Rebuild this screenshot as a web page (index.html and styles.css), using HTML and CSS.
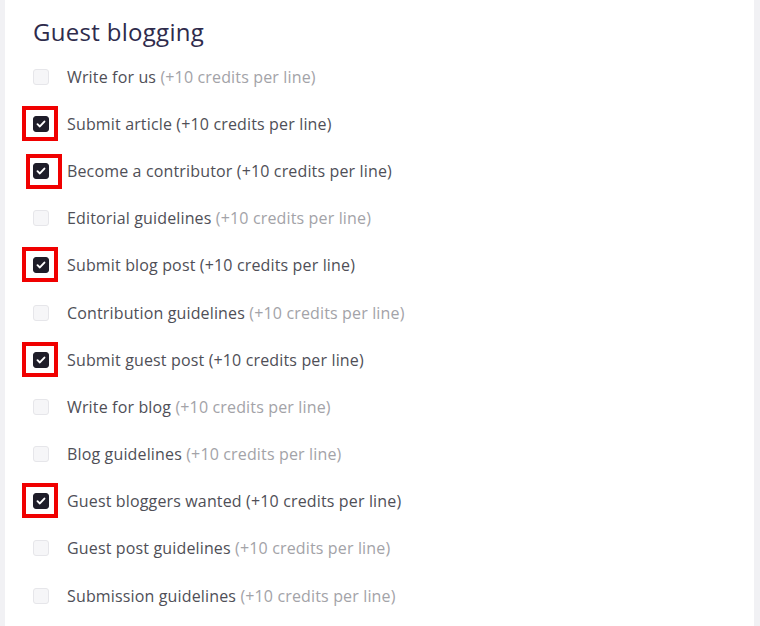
FILE: index.html
```html
<!DOCTYPE html>
<html lang="en">
<head>
    <meta charset="UTF-8">
    <meta name="viewport" content="width=device-width, initial-scale=1.0">
    <title>Guest blogging</title>
    <link rel="stylesheet" href="styles.css">
</head>
<body>
    <div class="card">
        <h2 class="title">Guest blogging</h2>
        <ul class="options">
            <li class="option">
                <span class="box"></span>
                <span class="label">Write for us <span class="note">(+10 credits per line)</span></span>
            </li>
            <li class="option checked">
                <span class="box"><svg viewBox="0 0 16 16"><path d="M4 8.2l2.7 2.6 5.2-5.6"/></svg></span>
                <span class="label">Submit article (+10 credits per line)</span>
                <span class="mark"></span>
            </li>
            <li class="option checked">
                <span class="box"><svg viewBox="0 0 16 16"><path d="M4 8.2l2.7 2.6 5.2-5.6"/></svg></span>
                <span class="label">Become a contributor (+10 credits per line)</span>
                <span class="mark shifted"></span>
            </li>
            <li class="option">
                <span class="box"></span>
                <span class="label">Editorial guidelines <span class="note">(+10 credits per line)</span></span>
            </li>
            <li class="option checked">
                <span class="box"><svg viewBox="0 0 16 16"><path d="M4 8.2l2.7 2.6 5.2-5.6"/></svg></span>
                <span class="label">Submit blog post (+10 credits per line)</span>
                <span class="mark"></span>
            </li>
            <li class="option">
                <span class="box"></span>
                <span class="label">Contribution guidelines <span class="note">(+10 credits per line)</span></span>
            </li>
            <li class="option checked">
                <span class="box"><svg viewBox="0 0 16 16"><path d="M4 8.2l2.7 2.6 5.2-5.6"/></svg></span>
                <span class="label">Submit guest post (+10 credits per line)</span>
                <span class="mark"></span>
            </li>
            <li class="option">
                <span class="box"></span>
                <span class="label">Write for blog <span class="note">(+10 credits per line)</span></span>
            </li>
            <li class="option">
                <span class="box"></span>
                <span class="label">Blog guidelines <span class="note">(+10 credits per line)</span></span>
            </li>
            <li class="option checked">
                <span class="box"><svg viewBox="0 0 16 16"><path d="M4 8.2l2.7 2.6 5.2-5.6"/></svg></span>
                <span class="label">Guest bloggers wanted (+10 credits per line)</span>
                <span class="mark"></span>
            </li>
            <li class="option">
                <span class="box"></span>
                <span class="label">Guest post guidelines <span class="note">(+10 credits per line)</span></span>
            </li>
            <li class="option">
                <span class="box"></span>
                <span class="label">Submission guidelines <span class="note">(+10 credits per line)</span></span>
            </li>
        </ul>
    </div>
</body>
</html>
```

FILE: styles.css
```css
body {
    font-family: "Open Sans", Arial, sans-serif;
    margin: 0;
    padding: 0;
    background-color: #f1f1f4;
}
.card {
    margin-left: 5px;
    width: 749px;
    height: 626px;
    padding: 16px 0 0 28px;
    box-sizing: border-box;
    background-color: #fff;
}
.title {
    margin: 0;
    font-size: 24px;
    font-weight: 400;
    line-height: 32px;
    letter-spacing: 0.3px;
    color: #2e2b4c;
}
.options {
    list-style: none;
    margin: 5px 0 0;
    padding: 0;
}
.option {
    position: relative;
    display: flex;
    align-items: center;
    height: 47.2px;
}
.box {
    flex: none;
    width: 16px;
    height: 16px;
    box-sizing: border-box;
    border: 1px solid #e6e6ea;
    border-radius: 3px;
    background-color: #f6f6f8;
}
.checked .box {
    border-color: #1e1d29;
    background-color: #1e1d29;
}
.box svg {
    display: block;
    width: 14px;
    height: 14px;
    fill: none;
    stroke: #fff;
    stroke-width: 2.2;
    stroke-linecap: round;
    stroke-linejoin: round;
}
.label {
    margin-left: 18px;
    font-size: 16px;
    letter-spacing: 0.15px;
    color: #4f4f57;
}
.note {
    color: #a3a3a8;
}
.mark {
    position: absolute;
    left: -11px;
    top: 50%;
    width: 36px;
    height: 35px;
    margin-top: -18px;
    box-sizing: border-box;
    border: 4px solid #f00000;
}
.mark.shifted {
    left: -7px;
    margin-top: -17px;
}
```
